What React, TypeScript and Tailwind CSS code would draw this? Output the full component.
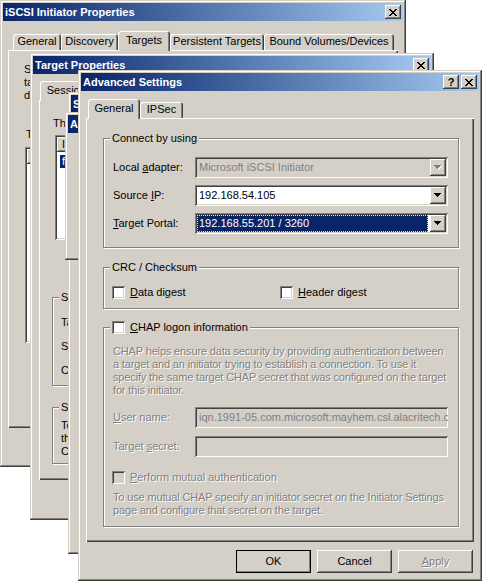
import React from "react";

const RAISED =
  "shadow-[inset_-1px_-1px_#404040,inset_1px_1px_#d4d0c8,inset_-2px_-2px_#808080,inset_2px_2px_#ffffff]";
const BTN =
  "shadow-[inset_-1px_-1px_#404040,inset_1px_1px_#ffffff,inset_-2px_-2px_#808080,inset_2px_2px_#d4d0c8]";
const SUNKEN =
  "shadow-[inset_1px_1px_#808080,inset_-1px_-1px_#ffffff,inset_2px_2px_#404040,inset_-2px_-2px_#d4d0c8]";
const PANEL = "shadow-[inset_1px_1px_#ffffff,inset_-1px_-1px_#404040,inset_-2px_-2px_#808080]";
const DIS = "text-[#808080] [text-shadow:1px_1px_0_#ffffff]";

const X_ROWS = [
  [[0, 2], [6, 2]],
  [[1, 2], [5, 2]],
  [[2, 4]],
  [[3, 2]],
  [[2, 4]],
  [[1, 2], [5, 2]],
  [[0, 2], [6, 2]],
];

function CloseGlyph() {
  return (
    <svg width="8" height="7" viewBox="0 0 8 7" shapeRendering="crispEdges">
      {X_ROWS.map((row, y) =>
        row.map(([x, w]) => <rect key={`${y}-${x}`} x={x} y={y} width={w} height={1} fill="#000" />)
      )}
    </svg>
  );
}

function Arrow({ disabled }: { disabled?: boolean }) {
  const rows = [7, 5, 3, 1];
  return (
    <svg width="8" height="5" viewBox="0 0 8 5" shapeRendering="crispEdges">
      {disabled &&
        rows.map((w, y) => (
          <rect key={`s${y}`} x={(7 - w) / 2 + 1} y={y + 1} width={w} height={1} fill="#fff" />
        ))}
      {rows.map((w, y) => (
        <rect key={y} x={(7 - w) / 2} y={y} width={w} height={1} fill={disabled ? "#808080" : "#000"} />
      ))}
    </svg>
  );
}

function TitleBtn({ children, className = "" }: { children: React.ReactNode; className?: string }) {
  return (
    <div className={`flex h-[14px] w-[16px] items-center justify-center bg-[#d4d0c8] ${BTN} ${className}`}>
      {children}
    </div>
  );
}

function TitleBar({ title, help }: { title: string; help?: boolean }) {
  return (
    <div className="flex h-[18px] shrink-0 items-center bg-linear-to-r from-[#0a246a] to-[#a6caf0] pl-[2px] pr-[2px]">
      <span className="flex-1 truncate font-bold text-white">{title}</span>
      {help && (
        <TitleBtn className="mr-[2px]">
          <span className="font-bold leading-none">?</span>
        </TitleBtn>
      )}
      <TitleBtn>
        <CloseGlyph />
      </TitleBtn>
    </div>
  );
}

function Win({
  className,
  title,
  help,
  children,
}: {
  className: string;
  title: string;
  help?: boolean;
  children?: React.ReactNode;
}) {
  return (
    <div className={`absolute isolate flex flex-col overflow-hidden bg-[#d4d0c8] p-[3px] ${RAISED} ${className}`}>
      <TitleBar title={title} help={help} />
      {children}
    </div>
  );
}

function Tab({ children, active, className = "" }: { children: React.ReactNode; active?: boolean; className?: string }) {
  return (
    <div
      className={`flex shrink-0 justify-center whitespace-nowrap rounded-t-[3px] bg-[#d4d0c8] shadow-[inset_1px_1px_#ffffff,inset_-1px_0_#404040,inset_-2px_0_#808080] ${
        active ? "relative z-10 h-[20px] pt-[3px]" : "mb-px h-[16px] pt-[1px]"
      } ${className}`}
    >
      {children}
    </div>
  );
}

function Group({
  label,
  className = "",
  children,
}: {
  label: React.ReactNode;
  className?: string;
  children?: React.ReactNode;
}) {
  return (
    <div className={`relative border border-[#808080] shadow-[1px_1px_0_#ffffff,inset_1px_1px_0_#ffffff] ${className}`}>
      <div className="absolute -top-[7px] left-[6px] flex items-center whitespace-nowrap bg-[#d4d0c8] px-[2px]">
        {label}
      </div>
      {children}
    </div>
  );
}

function Check({ disabled }: { disabled?: boolean }) {
  return <div className={`h-[13px] w-[13px] shrink-0 ${SUNKEN} ${disabled ? "bg-[#d4d0c8]" : "bg-white"}`} />;
}

function Combo({ value, disabled, selected }: { value: string; disabled?: boolean; selected?: boolean }) {
  return (
    <div className={`flex h-[21px] w-[253px] items-center p-[2px] ${SUNKEN} ${disabled ? "bg-[#d4d0c8]" : "bg-white"}`}>
      <div className="flex h-full flex-1 items-center pr-[2px]">
        {selected ? (
          <div className="flex h-full flex-1 items-center border border-dotted border-[#e8e8a0] bg-[#0a246a] pl-[1px] text-white">
            {value}
          </div>
        ) : (
          <span className={`pl-[2px] ${disabled ? "text-[#808080]" : ""}`}>{value}</span>
        )}
      </div>
      <div className={`flex h-[17px] w-[16px] items-center justify-center bg-[#d4d0c8] ${BTN}`}>
        <Arrow disabled={disabled} />
      </div>
    </div>
  );
}

function Field({ value }: { value?: string }) {
  return (
    <div className={`flex h-[21px] w-[253px] items-center overflow-hidden whitespace-nowrap bg-[#d4d0c8] pl-[4px] text-[#808080] ${SUNKEN}`}>
      {value}
    </div>
  );
}

function Button({ children, primary }: { children: React.ReactNode; primary?: boolean }) {
  return (
    <div
      className={`flex h-[23px] w-[75px] items-center justify-center bg-[#d4d0c8] ${BTN} ${
        primary ? "outline outline-1 -outline-offset-1 outline-black" : ""
      }`}
    >
      {children}
    </div>
  );
}

function ListView({
  className,
  header,
  selected,
}: {
  className: string;
  header: string;
  selected?: boolean;
}) {
  return (
    <div className={`flex flex-col bg-white p-[2px] ${SUNKEN} ${className}`}>
      <div className="flex h-[15px]">
        <div className={`w-[140px] bg-[#d4d0c8] pl-[5px] leading-[15px] ${BTN}`}>{header}</div>
        <div className={`w-[90px] bg-[#d4d0c8] pl-[5px] leading-[15px] ${BTN}`}>Status</div>
      </div>
      {selected && (
        <div className="ml-[3px] mt-[3px] h-[13px] w-[200px] bg-[#0a246a] pl-[2px] text-white">
          fffffffe9e51e18-4000013700000003
        </div>
      )}
    </div>
  );
}

export default function App() {
  return (
    <div className="relative h-[582px] w-[483px] overflow-hidden bg-white font-['Liberation_Sans',Arial,sans-serif] text-[11px] leading-[13px] text-black">
      {/* back window */}
      <Win className="left-0 top-0 h-[467px] w-[406px]" title="iSCSI Initiator Properties">
        <div className="px-[5px] pt-[10px]">
          <div className="relative z-10 flex h-[20px] items-end pl-[5px]">
            <Tab className="w-[48px]">General</Tab>
            <Tab className="w-[57px]">Discovery</Tab>
            <Tab active className="w-[52px]">
              Targets
            </Tab>
            <Tab className="w-[94px]">Persistent Targets</Tab>
            <Tab className="w-[130px]">Bound Volumes/Devices</Tab>
          </div>
          <div className={`-mt-px h-[378px] whitespace-nowrap pl-[16px] pt-[13px] ${PANEL}`}>
            <p>Select a target and click Log On to access the storage devices for that</p>
            <p>target. Click details to see information about the sessions, connections and</p>
            <p>devices for that target.</p>
            <p className="mt-[26px] pl-[2px]">Targets:</p>
            <ListView className="ml-[1px] mt-[6px] h-[196px] w-[360px]" header="Name" />
          </div>
        </div>
      </Win>

      <Win className="left-[30px] top-[53px] h-[467px] w-[404px]" title="Target Properties">
        <div className="px-[6px] pt-[7px]">
          <div className="relative z-10 flex h-[20px] items-end pl-[1px]">
            <Tab active className="w-[58px]">
              Sessions
            </Tab>
            <Tab className="w-[52px]">Devices</Tab>
            <Tab className="w-[62px]">Properties</Tab>
          </div>
          <div className={`-mt-px h-[380px] whitespace-nowrap pl-[14px] pt-[17px] ${PANEL}`}>
            <p>The following sessions are currently connected to this target:</p>
            <ListView className="ml-[2px] mt-[5px] h-[105px] w-[330px]" header="Identifier" selected />
            <Group label="Session Information" className="-ml-px mt-[57px] h-[89px] w-[340px]">
              <div className="flex flex-col gap-[11px] pl-[8px] pt-[18px]">
                <p>Target portal group tag:</p>
                <p>Status:</p>
                <p>Connection count:</p>
              </div>
            </Group>
            <Group label="Session Connections" className="-ml-px mt-[21px] h-[57px] w-[340px]">
              <div className="pl-[8px] pt-[11px]">
                <p>To configure how the connections within</p>
                <p>this session are load balanced, click</p>
                <p>Connections.</p>
              </div>
            </Group>
          </div>
        </div>
      </Win>

      <Win className="left-[68px] top-[92px] h-[462px] w-[400px]" title="Session Connections" />
      <Win className="left-[65px] top-[112px] h-[148px] w-[400px]" title="Advanced Settings" />

      {/* front window */}
      <Win className="left-[78px] top-[70px] h-[511px] w-[404px]" title="Advanced Settings" help>
        <div className="px-[5px] pt-[8px]">
          <div className="relative z-10 flex h-[20px] items-end pl-[2px]">
            <Tab active className="w-[52px]">
              General
            </Tab>
            <Tab className="w-[43px]">IPSec</Tab>
          </div>
          <div className={`-mt-px h-[424px] pl-[17px] pt-[20px] ${PANEL}`}>
            <Group label="Connect by using" className="h-[110px] w-[356px]">
              <div className="flex flex-col gap-[7px] pl-[9px] pt-[18px]">
                <div className="flex items-center">
                  <span className="w-[82px]">
                    Local <u>a</u>dapter:
                  </span>
                  <Combo value="Microsoft iSCSI Initiator" disabled />
                </div>
                <div className="flex items-center">
                  <span className="w-[82px]">
                    Source <u>I</u>P:
                  </span>
                  <Combo value="192.168.54.105" />
                </div>
                <div className="flex items-center">
                  <span className="w-[82px]">
                    <u>T</u>arget Portal:
                  </span>
                  <Combo value="192.168.55.201 / 3260" selected />
                </div>
              </div>
            </Group>

            <Group label="CRC / Checksum" className="mt-[19px] h-[42px] w-[356px]">
              <div className="flex pl-[8px] pt-[18px]">
                <div className="flex w-[168px] items-center gap-[5px]">
                  <Check />
                  <span>
                    <u>D</u>ata digest
                  </span>
                </div>
                <div className="flex items-center gap-[5px]">
                  <Check />
                  <span>
                    <u>H</u>eader digest
                  </span>
                </div>
              </div>
            </Group>

            <Group
              label={
                <span className="flex items-center gap-[5px]">
                  <Check />
                  <span>
                    <u>C</u>HAP logon information
                  </span>
                </span>
              }
              className="mt-[18px] h-[200px] w-[356px]"
            >
              <div className={`whitespace-nowrap pl-[9px] pt-[17px] ${DIS}`}>
                <div className="tracking-[-0.15px]">
                  <p>CHAP helps ensure data security by providing authentication between</p>
                  <p>a target and an initiator trying to establish a connection. To use it</p>
                  <p>specify the same target CHAP secret that was configured on the target</p>
                  <p>for this initiator.</p>
                </div>
                <div className="mt-[10px] flex flex-col gap-[8px] [text-shadow:none]">
                  <div className="flex items-center">
                    <span className={`w-[82px] ${DIS}`}>
                      <u>U</u>ser name:
                    </span>
                    <Field value="iqn.1991-05.com.microsoft:mayhem.csl.alacritech.com" />
                  </div>
                  <div className="flex items-center">
                    <span className={`w-[82px] ${DIS}`}>
                      Target <u>s</u>ecret:
                    </span>
                    <Field />
                  </div>
                </div>
                <div className="-ml-px mt-[14px] flex items-center gap-[5px]">
                  <Check disabled />
                  <span>
                    <u>P</u>erform mutual authentication
                  </span>
                </div>
                <div className="mt-[7px] tracking-[-0.15px]">
                  <p>To use mutual CHAP specify an initiator secret on the Initiator Settings</p>
                  <p>page and configure that secret on the target.</p>
                </div>
              </div>
            </Group>
          </div>
          <div className="mt-[8px] flex justify-end gap-[6px] pr-px">
            <Button primary>OK</Button>
            <Button>Cancel</Button>
            <Button>
              <span className={DIS}>
                <u>A</u>pply
              </span>
            </Button>
          </div>
        </div>
      </Win>
    </div>
  );
}
